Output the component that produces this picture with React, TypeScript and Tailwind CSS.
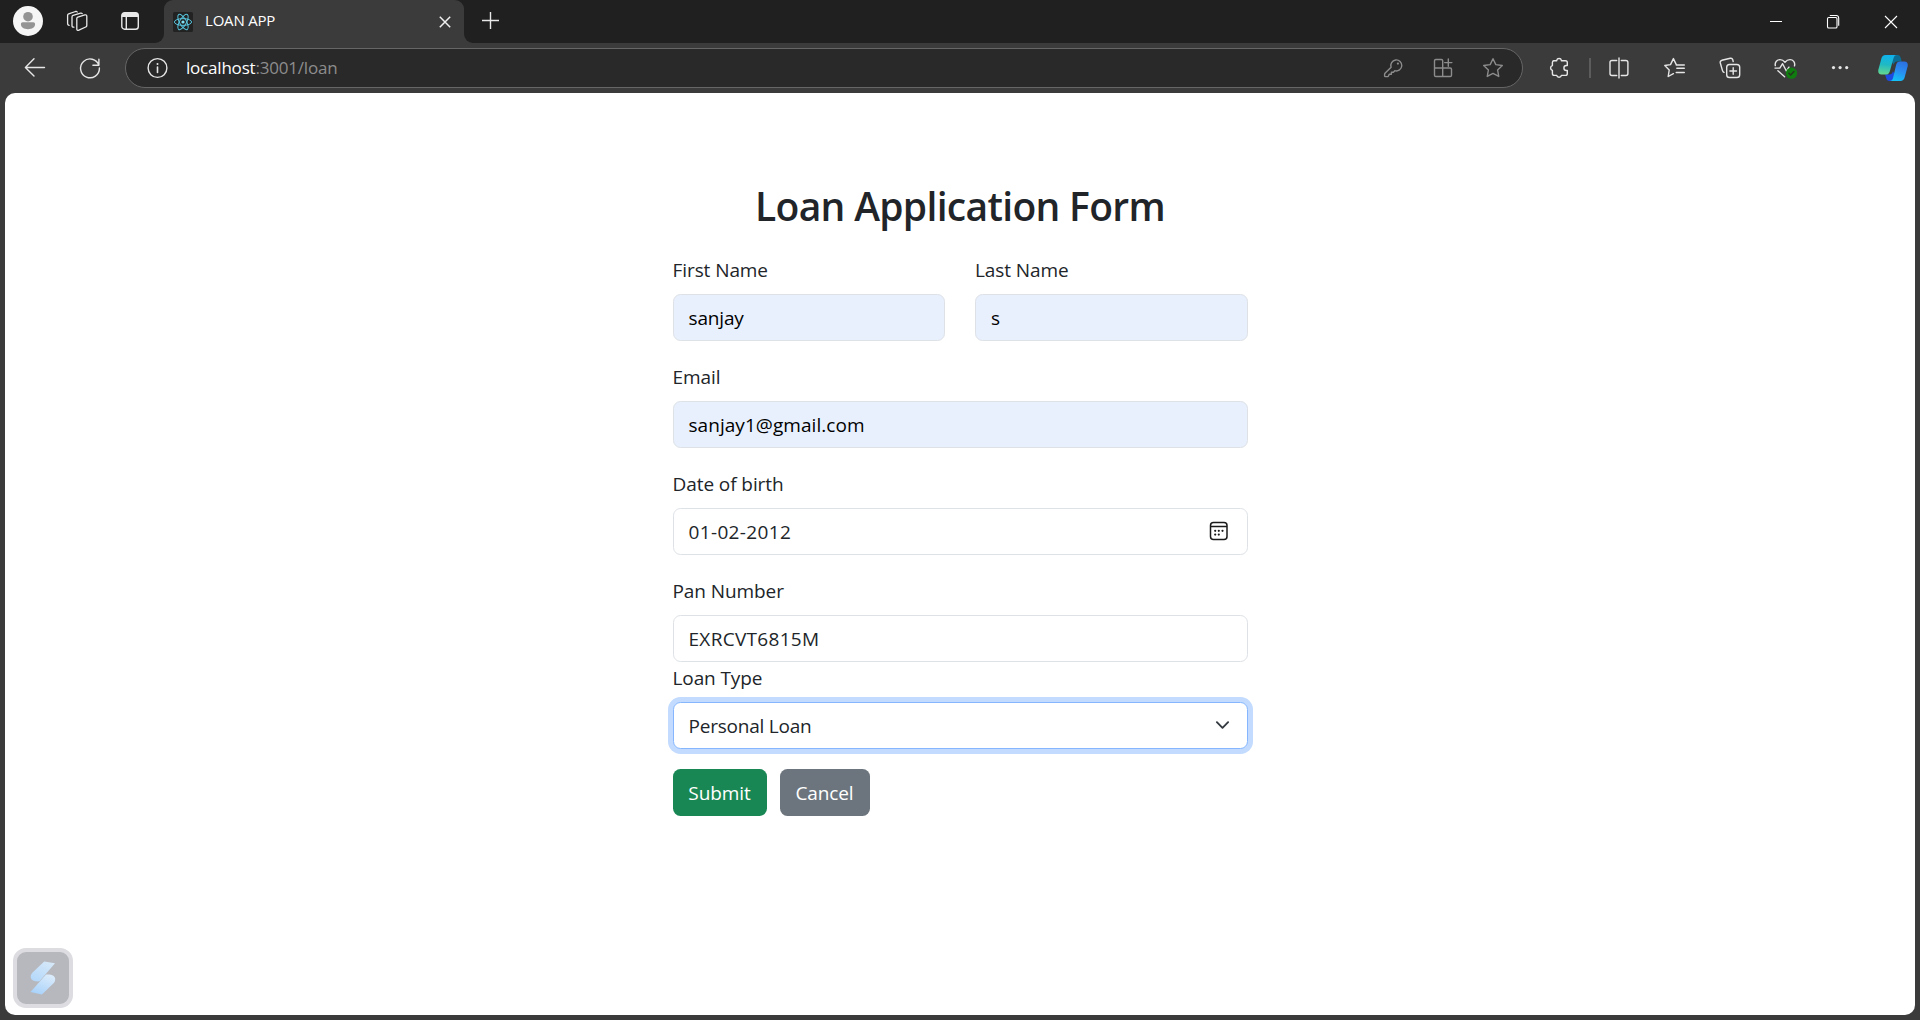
import type { ReactNode } from "react";

function Icon({ children, className = "" }: { children: ReactNode; className?: string }) {
  return (
    <svg
      viewBox="0 0 24 24"
      width="24"
      height="24"
      fill="none"
      stroke="currentColor"
      strokeWidth="1.4"
      strokeLinecap="round"
      strokeLinejoin="round"
      className={`block shrink-0 ${className}`}
    >
      {children}
    </svg>
  );
}

function ProfileAvatar() {
  return (
    <svg viewBox="0 0 30 30" width="30" height="30" className="ml-[13px] block shrink-0">
      <circle cx="15" cy="15" r="15" fill="#f6f6f6" />
      <circle cx="15" cy="10.7" r="4.8" fill="#949494" />
      <path d="M9.7 16.2h10.6a1.8 1.8 0 0 1 1.8 1.8c0 3.4-3 5.2-7.1 5.2S7.9 21.4 7.9 18a1.8 1.8 0 0 1 1.8-1.8z" fill="#949494" />
    </svg>
  );
}

function ReactFavicon() {
  return (
    <svg viewBox="0 0 20 20" width="20" height="20" className="block shrink-0">
      <rect width="20" height="20" rx="1.5" fill="#222222" />
      <g fill="none" stroke="#58c4dc" strokeWidth="1">
        <ellipse cx="10" cy="10" rx="8.6" ry="3.4" />
        <ellipse cx="10" cy="10" rx="8.6" ry="3.4" transform="rotate(60 10 10)" />
        <ellipse cx="10" cy="10" rx="8.6" ry="3.4" transform="rotate(120 10 10)" />
      </g>
      <circle cx="10" cy="10" r="1.6" fill="#7fe3f7" />
    </svg>
  );
}

function CopilotLogo() {
  return (
    <svg viewBox="0 0 30 28" width="30" height="28" className="block shrink-0">
      <defs>
        <linearGradient id="cpLeft" x1="8" y1="1" x2="6" y2="20" gradientUnits="userSpaceOnUse">
          <stop offset="0" stopColor="#0fb2ec" />
          <stop offset="0.5" stopColor="#1fb9c4" />
          <stop offset="1" stopColor="#62d590" />
        </linearGradient>
        <linearGradient id="cpRight" x1="25" y1="7" x2="18" y2="27" gradientUnits="userSpaceOnUse">
          <stop offset="0" stopColor="#2b6fe0" />
          <stop offset="0.5" stopColor="#2a8df0" />
          <stop offset="1" stopColor="#12c2f5" />
        </linearGradient>
      </defs>
      <path d="M13 1h6.500c2 0 2.700 1 3.300 3l.9 3.500h-4.500c-2.200 0-3 1.300-3.600 3.300L13 7z" fill="#0b6d93" />
      <path d="M17 27h-5.500c-2 0-2.800-1-3.300-3L7 20.500h4.200c2.200 0 3.100-1.200 3.700-3.300l2.600 4z" fill="#1d4be0" />
      <path d="M7.500 1H19c-2 0-2.900 1.200-3.500 3.300l-3.600 12.600c-.7 2.400-1.900 3.600-4.200 3.600H3.500C.7 20.500-.2 18.200.4 15.500L3.400 4.500C4 2.200 5.300 1 7.500 1z" fill="url(#cpLeft)" />
      <path d="M22.500 27H11.500c2 0 3-1.200 3.600-3.300l3-12.700c.6-2.400 1.800-3.500 4.100-3.500h4.300c2.800 0 3.700 2.300 3.100 5l-3 11c-.6 2.300-1.900 3.500-4.100 3.500z" fill="url(#cpRight)" />
    </svg>
  );
}

function TitleBar() {
  return (
    <div className="flex h-[43px] shrink-0 bg-[#202020] text-[#e8e8e8]">
      <div className="flex h-[42px] items-center">
        <ProfileAvatar />
        <Icon className="ml-[22px]">
          <g transform="translate(1 -.3)" strokeWidth="1.3">
            <path d="M10.800 9.900q0-1.100 1-1.500l7-2.200q1.900-.5 2 1.200v9.300q0 1.200-1.100 1.600l-6.800 3.200q-2 .7-2.100-1.100z" />
            <path d="M7.900 18.500q-1.900.1-1.900-1.500V8.300q0-1.200 1.100-1.600l7.500-2.300q1.100-.2 1.600.5" />
            <path d="M3.200 16.600q-1.600 0-1.600-1.700V6.700q0-1.200 1.100-1.600l6.800-2.300q1.200-.3 1.700.5" />
          </g>
        </Icon>
        <Icon className="ml-[29px]">
          <rect x="3.800" y="3.700" width="16.500" height="16.500" rx="2.800" />
          <path d="M3.800 6.500a2.800 2.800 0 0 1 2.800-2.800h10.900a2.800 2.800 0 0 1 2.800 2.800V8H3.800z" fill="currentColor" stroke="none" />
          <path d="M8.300 8v12" />
        </Icon>
      </div>
      <div className="ml-[12px] flex w-[10px] items-end bg-[#3b3b3b]">
        <div className="h-full w-full rounded-br-[9px] bg-[#202020]" />
      </div>
      <div className="flex w-[300px] rounded-t-[9px] bg-[#3b3b3b] pr-[13px] pl-[9px]">
        <div className="flex h-[44px] w-full items-center">
          <ReactFavicon />
          <span className="-mt-[5px] ml-[12px] text-[15px] leading-5 tracking-[-0.2px] text-white">LOAN APP</span>
          <svg viewBox="0 0 12 12" width="12" height="12" className="ml-auto block" stroke="#f0f0f0" strokeWidth="1.5">
            <path d="M.8.800l10.400 10.400M11.200.8L.8 11.200" />
          </svg>
        </div>
      </div>
      <div className="w-[10px] bg-[#3b3b3b]">
        <div className="h-full w-full rounded-bl-[9px] bg-[#202020]" />
      </div>
      <svg viewBox="0 0 18 18" width="18" height="18" className="mt-[12px] ml-[8px] block" stroke="#e8e8e8" strokeWidth="1.4">
        <path d="M8.500 0v17M0 8.500h17" />
      </svg>
      <div className="mt-[15px] mr-[22px] ml-auto flex text-white">
        <svg viewBox="0 0 14 14" width="14" height="14" fill="none" stroke="currentColor" className="mr-[43px] block">
          <path d="M1 6.500h12" />
        </svg>
        <svg viewBox="0 0 14 14" width="14" height="14" fill="none" stroke="currentColor" strokeWidth="1.1" className="mr-[44px] block">
          <rect x="1.500" y="2.500" width="9.500" height="10.500" rx="1.300" />
          <path d="M3.800.5h6.500q2.400 0 2.400 2.400v7.800" />
        </svg>
        <svg viewBox="0 0 14 14" width="14" height="14" fill="none" stroke="currentColor" strokeWidth="1.1" className="block">
          <path d="M1 1l12 12M13 1L1 13" />
        </svg>
      </div>
    </div>
  );
}

const starPath =
  "M12 2.700l2.850 5.900 6.450.9-4.700 4.500 1.150 6.450L12 17.400l-5.750 3.050L7.400 14 2.700 9.500l6.450-.9z";

function Toolbar() {
  return (
    <div className="flex h-[50px] shrink-0 items-center bg-[#3b3b3b] text-[#e6e6e6]">
      <Icon className="ml-[23px]">
        <path d="M21.500 11.500H2.700M11 2.800L2.400 11.500l8.600 8.600" />
      </Icon>
      <Icon className="ml-[31px]">
        <path d="M20.900 9.300A9.400 9.400 0 1 0 21.400 12M20.900 3.200v6.100h-6" />
      </Icon>
      <div className="ml-[23px] flex h-[40px] w-[1398px] items-center rounded-full border border-[#666666] bg-[#292929] pr-[17px] pl-[19px]">
        <Icon>
          <circle cx="12.500" cy="12" r="9.400" />
          <path d="M12.500 11v5.500" strokeWidth="1.6" />
          <circle cx="12.500" cy="7.900" r="1" fill="currentColor" stroke="none" />
        </Icon>
        <div className="-mt-px ml-[17px] text-[17px] leading-6 tracking-[-0.2px] text-white">
          localhost<span className="text-[#8d8d8d]">:3001/loan</span>
        </div>
        <div className="ml-auto flex gap-[26px] text-[#8c8c8c]">
          <Icon>
            <path d="M10.100 11.200A5.500 5.500 0 1 1 13.800 14.700L12.400 16.200H10.400V18.200H8.400L7.300 20.200Q6.900 20.600 6.300 20.600H4.300Q3.600 20.600 3.600 19.900V18.300Q3.600 17.700 4 17.300z" />
            <circle cx="16.900" cy="7.600" r="1.100" fill="currentColor" stroke="none" />
          </Icon>
          <Icon>
            <path d="M11.700 12V4.800q0-1.300-1.300-1.300H4.800q-1.300 0-1.300 1.300v14.400q0 1.300 1.300 1.300h14.400q1.300 0 1.300-1.300v-5.900q0-1.300-1.300-1.300H3.500M11.700 12v8.500M17.300 3v7.200M13.700 6.600h7.200" />
          </Icon>
          <Icon>
            <path d={starPath} />
          </Icon>
        </div>
      </div>
      <Icon className="ml-[25px]">
        <path d="M5.500 4.800H8.700V4.400a2.400 2.400 0 0 1 4.700 0v.4H17.500q1.800 0 1.800 1.800v2.900h-.9a2.500 2.500 0 0 0 0 5h.9v3q0 1.900-1.800 1.900h-4.100a2.400 2.400 0 0 1-4.700 0H6.300q-1.900 0-1.900-1.900v-3.100a2.500 2.500 0 0 1 0-4.800V6.500Q4.400 4.800 6.200 4.800z" />
      </Icon>
      <div className="ml-[17px] h-[20px] w-[2px] bg-[#5c5c5c]" />
      <Icon className="ml-[16px]">
        <path d="M9.700 4.500H5Q3 4.500 3 6.500v11q0 2 2 2h4.700M14.300 4.500h4.600q2 0 2 2v11q0 2-2 2h-4.600M12 2v20" />
      </Icon>
      <Icon className="ml-[32px]">
        <path d="M17.200 9l-3.900-.4-2.900-6-2.900 6-5.700.9 4.400 4.500-1 6.500 5.200-2.800M13.800 12.200h7.500M13.200 9h8.100M13.200 16.500h8.100" />
      </Icon>
      <Icon className="ml-[31px]">
        <rect x="8.700" y="8.500" width="13" height="13" rx="2.800" />
        <path d="M15.200 11.700v6.600M11.900 15h6.600M6 16.400q-1.100-.4-1.500-1.800L2.300 7q-.5-2 1.500-2.700l8.500-2q1.800-.4 2.400 1.300l.5 1.900" />
      </Icon>
      <Icon className="ml-[31px]">
        <path d="M2.300 9.600C1.600 5.900 4.200 3.600 7 3.600q2.900 0 5 2.600 2.100-2.600 5-2.600c3 0 5.400 2.500 4.500 6.200M4.900 14.700l6.700 6M2 12.100h4.800l2.800-4.400 3.900 7.500 2.400-4" />
        <circle cx="18.500" cy="17.200" r="5.600" fill="#107c10" stroke="none" />
        <path d="M15.900 17.300l1.800 1.700 3.200-3.400" stroke="#26331f" />
      </Icon>
      <Icon className="ml-[31px]">
        <g fill="currentColor" stroke="none">
          <circle cx="5.500" cy="11.600" r="1.600" />
          <circle cx="12.100" cy="11.600" r="1.600" />
          <circle cx="18.700" cy="11.600" r="1.600" />
        </g>
      </Icon>
      <div className="ml-[26px]">
        <CopilotLogo />
      </div>
    </div>
  );
}

const inputBase =
  "h-[47px] w-full rounded-[7.5px] border border-[#dee2e6] px-[15px] pt-[2px] text-[19px] outline-none";
const autofilled = "bg-[#e8f0fe] text-black";
const plain = "bg-white text-[#212529]";

function Field({ label, value, filled = false, spacing = "", children }: {
  label: string;
  value: string;
  filled?: boolean;
  spacing?: string;
  children?: ReactNode;
}) {
  return (
    <label className="flex min-w-0 flex-1 flex-col gap-[8px]">
      <span className="leading-[32px] tracking-[-0.08px]">{label}</span>
      <div className={`flex items-center ${inputBase} ${filled ? autofilled : plain}`}>
        <span className={`flex-1 ${spacing}`}>{value}</span>
        {children}
      </div>
    </label>
  );
}

function CalendarIcon() {
  return (
    <svg viewBox="0 0 20 20" width="20" height="20" fill="none" stroke="#1b1b1b" strokeWidth="1.5" className="-mt-[4px] mr-[3px] block">
      <rect x="1.500" y="1.500" width="16.500" height="17" rx="3" />
      <path d="M1.500 5.500h16.500" />
      <g fill="#1b1b1b" stroke="none">
        <circle cx="6.200" cy="9.800" r="1.100" />
        <circle cx="9.800" cy="9.800" r="1.100" />
        <circle cx="13.500" cy="9.800" r="1.100" />
        <circle cx="6.200" cy="13.600" r="1.100" />
        <circle cx="9.800" cy="13.600" r="1.100" />
      </g>
    </svg>
  );
}

function LoanForm() {
  return (
    <form className="mx-auto w-[575px] pt-[89px] text-[19px] text-[#212529]">
      <h1 className="text-center text-[39px] leading-[48px] font-semibold tracking-[-0.68px]">
        Loan Application Form
      </h1>
      <div className="mt-[24px] flex flex-col gap-[20px]">
        <div className="flex gap-[30px]">
          <Field label="First Name" value="sanjay" spacing="tracking-[-0.15px]" filled />
          <Field label="Last Name" value="s" filled />
        </div>
        <Field label="Email" value="sanjay1@gmail.com" spacing="tracking-[0.05px]" filled />
        <Field label="Date of birth" value="01-02-2012" spacing="tracking-[0.35px]">
          <CalendarIcon />
        </Field>
        <Field label="Pan Number" value="EXRCVT6815M" spacing="tracking-[0.3px]" />
      </div>
      <div className="mt-px leading-[30px] tracking-[-0.1px]">Loan Type</div>
      <div className="mt-[9px] flex h-[47px] items-center rounded-[7.5px] border border-[#86b7fe] bg-white px-[15px] pt-px shadow-[0_0_0_5px_#c2dbfe]">
        <span className="flex-1 tracking-[-0.22px]">Personal Loan</span>
        <svg viewBox="0 0 16 16" width="15" height="20" fill="none" stroke="#343a40" strokeWidth="2" strokeLinecap="round" strokeLinejoin="round" className="-mt-[2px] mr-[2px] block">
          <path d="M2 5l6 6 6-6" />
        </svg>
      </div>
      <div className="mt-[20px] flex gap-[13px] text-white">
        <button type="button" className="h-[47px] w-[94px] rounded-[7.5px] bg-[#198754] pt-[2px] font-medium tracking-[-0.1px]">Submit</button>
        <button type="button" className="h-[47px] w-[90px] rounded-[7.5px] bg-[#6c757d] pt-[2px] font-medium tracking-[-0.1px]">Cancel</button>
      </div>
    </form>
  );
}

function FloatingWidget() {
  return (
    <div className="absolute bottom-[7px] left-[8px] flex size-[60px] items-center justify-center rounded-[13px] border-4 border-[#dcdce1] bg-[#b7b8be]">
      <svg viewBox="0 0 26 34" width="26" height="34" className="-mt-[1px] block">
        <defs>
          <linearGradient id="boltTop" x1="0.8" y1="0" x2="0.2" y2="1">
            <stop offset="0" stopColor="#d6e8f8" />
            <stop offset="1" stopColor="#b4d8fb" />
          </linearGradient>
          <linearGradient id="boltBottom" x1="0.8" y1="0" x2="0.3" y2="1">
            <stop offset="0" stopColor="#dcecfb" />
            <stop offset="1" stopColor="#a9d2fa" />
          </linearGradient>
        </defs>
        <path d="M14.200.500L25 2.200 9.500 20.300C5 20.800 1.300 19.500.8 16.500c-.3-2 .4-3.500 1.800-5z" fill="url(#boltTop)" />
        <path d="M11.800 33.500L.5 31 16 13.600c4.500-.6 8.600.7 9.100 3.800.3 2-.5 3.600-1.800 5.100z" fill="url(#boltBottom)" />
      </svg>
    </div>
  );
}

export default function App() {
  return (
    <div className="flex h-[1020px] w-[1920px] flex-col overflow-hidden bg-[#3b3b3b] font-['Open_Sans',sans-serif]">
      <TitleBar />
      <Toolbar />
      <main className="relative mx-[5px] mb-[5px] flex-1 overflow-hidden rounded-[10px] bg-white">
        <LoanForm />
        <FloatingWidget />
      </main>
    </div>
  );
}
